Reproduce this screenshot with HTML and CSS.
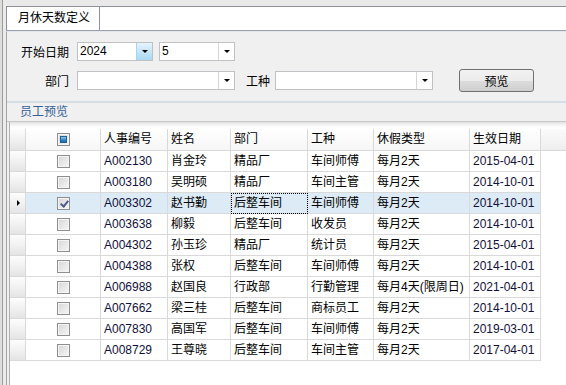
FILE: index.html
```html
<!DOCTYPE html>
<html>
<head>
	<meta charset="utf-8">
	<title>月休天数定义</title>
	<link rel="stylesheet" href="styles.css">
</head>
<body>
	<div class="app">
		<div class="edge"></div>
		<div class="main">
			<div class="top-gap"></div>
			<div class="tabs">
				<div class="tab">月休天数定义</div>
				<div class="tab-rest"></div>
			</div>

			<div class="page">
				<div class="filters">
					<div class="frow">
						<label class="lbl">开始日期</label>
						<div class="combo w76"><span class="val">2024</span><span class="arrow hot"><i></i></span></div>
						<div class="combo w76 gap6"><span class="val">5</span><span class="arrow"><i></i></span></div>
					</div>
					<div class="frow second">
						<label class="lbl">部门</label>
						<div class="combo w158"><span class="val"></span><span class="arrow"><i></i></span></div>
						<label class="lbl2">工种</label>
						<div class="combo w158"><span class="val"></span><span class="arrow"><i></i></span></div>
						<button class="btn">预览</button>
					</div>
				</div>

				<div class="section">员工预览</div>

				<div class="grid">
					<div class="row head">
						<div class="c rh"></div>
						<div class="c chk"><span class="box all"></span></div>
						<div class="c">人事编号</div>
						<div class="c">姓名</div>
						<div class="c">部门</div>
						<div class="c">工种</div>
						<div class="c">休假类型</div>
						<div class="c">生效日期</div>
						<div class="c fill"></div>
					</div>
					<div class="row">
						<div class="c rh"></div>
						<div class="c chk"><span class="box"></span></div>
						<div class="c code">A002130</div>
						<div class="c">肖金玲</div>
						<div class="c">精品厂</div>
						<div class="c">车间师傅</div>
						<div class="c">每月2天</div>
						<div class="c code">2015-04-01</div>
					</div>
					<div class="row">
						<div class="c rh"></div>
						<div class="c chk"><span class="box"></span></div>
						<div class="c code">A003180</div>
						<div class="c">吴明硕</div>
						<div class="c">精品厂</div>
						<div class="c">车间主管</div>
						<div class="c">每月2天</div>
						<div class="c code">2014-10-01</div>
					</div>
					<div class="row sel">
						<div class="c rh"><span class="cur"></span></div>
						<div class="c chk"><span class="box on"></span></div>
						<div class="c code">A003302</div>
						<div class="c">赵书勤</div>
						<div class="c focus">后整车间</div>
						<div class="c">车间师傅</div>
						<div class="c">每月2天</div>
						<div class="c code">2014-10-01</div>
					</div>
					<div class="row">
						<div class="c rh"></div>
						<div class="c chk"><span class="box"></span></div>
						<div class="c code">A003638</div>
						<div class="c">柳毅</div>
						<div class="c">后整车间</div>
						<div class="c">收发员</div>
						<div class="c">每月2天</div>
						<div class="c code">2014-10-01</div>
					</div>
					<div class="row">
						<div class="c rh"></div>
						<div class="c chk"><span class="box"></span></div>
						<div class="c code">A004302</div>
						<div class="c">孙玉珍</div>
						<div class="c">精品厂</div>
						<div class="c">统计员</div>
						<div class="c">每月2天</div>
						<div class="c code">2015-04-01</div>
					</div>
					<div class="row">
						<div class="c rh"></div>
						<div class="c chk"><span class="box"></span></div>
						<div class="c code">A004388</div>
						<div class="c">张权</div>
						<div class="c">后整车间</div>
						<div class="c">车间师傅</div>
						<div class="c">每月2天</div>
						<div class="c code">2014-10-01</div>
					</div>
					<div class="row">
						<div class="c rh"></div>
						<div class="c chk"><span class="box"></span></div>
						<div class="c code">A006988</div>
						<div class="c">赵国良</div>
						<div class="c">行政部</div>
						<div class="c">行勤管理</div>
						<div class="c">每月4天(限周日)</div>
						<div class="c code">2021-04-01</div>
					</div>
					<div class="row">
						<div class="c rh"></div>
						<div class="c chk"><span class="box"></span></div>
						<div class="c code">A007662</div>
						<div class="c">梁三桂</div>
						<div class="c">后整车间</div>
						<div class="c">商标员工</div>
						<div class="c">每月2天</div>
						<div class="c code">2014-10-01</div>
					</div>
					<div class="row">
						<div class="c rh"></div>
						<div class="c chk"><span class="box"></span></div>
						<div class="c code">A007830</div>
						<div class="c">高国军</div>
						<div class="c">后整车间</div>
						<div class="c">车间师傅</div>
						<div class="c">每月2天</div>
						<div class="c code">2019-03-01</div>
					</div>
					<div class="row">
						<div class="c rh"></div>
						<div class="c chk"><span class="box"></span></div>
						<div class="c code">A008729</div>
						<div class="c">王尊晓</div>
						<div class="c">后整车间</div>
						<div class="c">车间主管</div>
						<div class="c">每月2天</div>
						<div class="c code">2017-04-01</div>
					</div>
				</div>
			</div>
		</div>
	</div>
</body>
</html>
```

FILE: styles.css
```css
body {
	margin: 0;
	overflow: hidden;
	font-family: "Liberation Sans", "Noto Sans CJK SC", sans-serif;
	font-size: 12px;
	color: #000;
}

.app {
	display: flex;
	width: 566px;
	height: 385px;
	background: #f0f0f0;
}

.edge {
	width: 6px;
	flex: none;
	background: linear-gradient(to right, #dedede 0, #dedede 2px, #9c9c9c 2px, #9c9c9c 3px, #ebebeb 3px);
}

.main {
	flex: 1;
	display: flex;
	flex-direction: column;
	min-width: 0;
}

.top-gap {
	height: 6px;
	background: #e9e9e9;
}

/* tab strip */
.tabs {
	display: flex;
	height: 25px;
	box-sizing: border-box;
	background: #fff;
	border-top: 1px solid #8d8f9c;
	border-bottom: 1px solid #9aa0ad;
}

.tab {
	width: 94px;
	box-sizing: border-box;
	border-left: 1px solid #8d8f9c;
	border-right: 1px solid #8d8f9c;
	padding-left: 11px;
	line-height: 23px;
	white-space: nowrap;
}

.tab-rest {
	flex: 1;
}

.page {
	flex: 1;
	display: flex;
	flex-direction: column;
	border-left: 1px solid #a3a3a3;
	border-top: 1px solid #e3e7ed;
}

/* filter area */
.filters {
	padding: 10px 0 9px 0;
	border-bottom: 2px solid #d5dee6;
}

.frow {
	display: flex;
	align-items: center;
	height: 19px;
}

.frow.second {
	height: 23px;
	margin-top: 8px;
}

.lbl {
	width: 62px;
	margin-right: 8px;
	text-align: right;
	white-space: nowrap;
}

.lbl2 {
	margin-left: 11px;
	margin-right: 5px;
	white-space: nowrap;
}

.combo {
	display: flex;
	height: 19px;
	box-sizing: border-box;
	border: 1px solid #bfc1c5;
	background: #fff;
}

.w76 {
	width: 76px;
}

.w158 {
	width: 158px;
}

.gap6 {
	margin-left: 6px;
}

.combo .val {
	flex: 1;
	padding-left: 2px;
	line-height: 17px;
}

.combo .arrow {
	width: 15px;
	border-left: 1px solid #d6d6d6;
	display: flex;
	align-items: center;
	justify-content: center;
}

.combo .arrow.hot {
	border-left-color: #a9d3ee;
	background: linear-gradient(#e6f4fc, #c6e6f8 50%, #aad8f4);
}

.combo .arrow i {
	width: 0;
	height: 0;
	border-left: 3px solid transparent;
	border-right: 3px solid transparent;
	border-top: 3px solid #000;
}

.btn {
	width: 75px;
	height: 23px;
	margin-left: 26px;
	padding: 0;
	border: 1px solid #707070;
	border-radius: 3px;
	background: linear-gradient(#f2f2f2, #ebebeb 50%, #dddddd 50%, #cfcfcf);
	font-family: "Liberation Sans", "Noto Sans CJK SC", sans-serif;
	font-size: 12px;
	color: #000;
}

/* section title */
.section {
	height: 18px;
	line-height: 18px;
	padding-left: 13px;
	color: #33609a;
	border-bottom: 1px solid #c6c6c6;
}

/* data grid */
.grid {
	flex: 1;
	margin-left: 2px;
	border-left: 1px solid #b0b0b0;
	padding-top: 7px;
	background: linear-gradient(#e2e2e2, #fafafa 4px, #fff 7px);
}

.row {
	display: grid;
	grid-template-columns: 16px 75px 67px 63px 77px 66px 96px 71px;
	height: 21px;
}

.row.head {
	grid-template-columns: 16px 75px 67px 63px 77px 66px 96px 71px 1fr;
	height: 22px;
}

.c {
	box-sizing: border-box;
	border-right: 1px solid #d9d9d9;
	border-bottom: 1px solid #d9d9d9;
	padding-left: 3px;
	line-height: 20px;
	white-space: nowrap;
	overflow: hidden;
}

.head .c {
	line-height: 21px;
	background: linear-gradient(#ffffff, #f6f6f6);
}

.c.rh, .head .c.rh {
	padding: 0;
	background: linear-gradient(#fdfdfd, #f0f0f0 55%, #e4e4e4);
	display: flex;
	align-items: center;
	justify-content: center;
}

.head .c.fill {
	border-right: none;
	background: linear-gradient(#fbfbfb, #eeeeee);
}

.c.chk {
	padding: 0;
	display: flex;
	align-items: center;
	justify-content: center;
}

.code {
	color: #10103a;
}

.sel .c {
	background: #dcebf6;
}

.sel .c.rh {
	background: linear-gradient(#fdfdfd, #f0f0f0 55%, #e4e4e4);
}

.c.focus {
	outline: 1px dotted #000;
	outline-offset: -1px;
}

.cur {
	width: 0;
	height: 0;
	margin-left: 1px;
	border-top: 3px solid transparent;
	border-bottom: 3px solid transparent;
	border-left: 3px solid #000;
}

/* check boxes */
.box {
	position: relative;
	width: 13px;
	height: 13px;
	box-sizing: border-box;
	border: 1px solid #8e8f8f;
	box-shadow: inset 0 0 0 1px #f4f4f4;
	background: linear-gradient(135deg, #d6d6d6, #f6f6f6);
}

.box.all::after {
	content: "";
	position: absolute;
	left: 2px;
	top: 2px;
	width: 7px;
	height: 7px;
	box-sizing: border-box;
	border: 1px solid #235e95;
	background: linear-gradient(#8cc8ef, #2c86cc 60%, #1d6aa8);
}

.box.on::after {
	content: "";
	position: absolute;
	left: 4px;
	top: 1px;
	width: 3px;
	height: 6px;
	border-right: 2px solid #4a5a8c;
	border-bottom: 2px solid #4a5a8c;
	transform: rotate(40deg);
}
```
